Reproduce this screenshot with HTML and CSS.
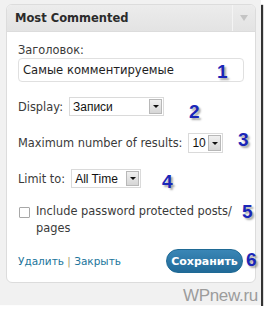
FILE: index.html
```html
<!DOCTYPE html>
<html>
<head>
<meta charset="utf-8">
<link rel="stylesheet" href="styles.css">
</head>
<body>
<div class="frame">
  <div class="widget">
    <div class="head">
      <span class="title">Most Commented</span>
      <span class="toggle"><span class="tri"></span></span>
    </div>
    <div class="body">
      <div class="label">Заголовок:</div>
      <div class="input">Самые комментируемые</div>
      <div class="row r-display"><span class="lbl">Display:</span><span class="select s-display"><span class="val">Записи</span><span class="btn"><span class="dtri"></span></span></span></div>
      <div class="row r-max"><span class="lbl">Maximum number of results:</span><span class="select s-max"><span class="val">10</span><span class="btn"><span class="dtri"></span></span></span></div>
      <div class="row r-limit"><span class="lbl">Limit to:</span><span class="select s-limit"><span class="val">All Time</span><span class="btn"><span class="dtri"></span></span></span></div>
      <div class="check"><span class="box"></span><span class="ctext">Include password protected posts/<br>pages</span></div>
      <div class="foot">
        <span class="links"><a class="lnk">Удалить</a> <span class="sep">|</span> <a class="lnk">Закрыть</a></span>
        <span class="save">Сохранить</span>
      </div>
    </div>
    <span class="num n1">1</span>
    <span class="num n2">2</span>
    <span class="num n3">3</span>
    <span class="num n4">4</span>
    <span class="num n5">5</span>
    <span class="num n6">6</span>
  </div>
  <div class="mark">WPnew.ru</div>
</div>
</body>
</html>
```
FILE: styles.css
```css
html, body { margin: 0; padding: 0; background: #ffffff; }
.frame {
  width: 261px; height: 306px;
  background: #f1f1f1;
  border-bottom: 1px solid #fdfdfd;
  padding: 4px 0 0 6px;
  box-sizing: border-box;
  display: flex; flex-direction: column;
  box-shadow: 3px 4px 1px -1px #333;
  font-family: "DejaVu Sans", Verdana, sans-serif;
  color: #333;
}
.widget {
  position: relative;
  width: 250px; height: 279px;
  box-sizing: border-box;
  background: #fff;
  border: 1px solid #dcdcdc;
  border-radius: 6px;
}
.head {
  height: 26px;
  display: flex; align-items: center; justify-content: space-between;
  background: linear-gradient(#ececec, #e3e3e3);
  border-bottom: 1px solid #dcdcdc;
  border-radius: 5px 5px 0 0;
}
.title {
  font-family: "DejaVu Sans", Verdana, sans-serif;
  font-weight: bold; font-size: 11.5px; color: #2b2b2b;
  padding-left: 8px;
}
.toggle {
  width: 22px; height: 26px;
  border-left: 1px solid #f4f4f4;
  display: flex; align-items: center; justify-content: center;
}
.tri {
  width: 0; height: 0;
  border-left: 4px solid transparent; border-right: 4px solid transparent;
  border-top: 6px solid #c4c4c4;
}
.body { padding: 12px 0 0 11px; font-size: 11.4px; color: #3a3a3a; }
.label { line-height: 13px; height: 13px; margin-bottom: 1px; }
.input {
  width: 226px; height: 24px; box-sizing: border-box;
  border: 1px solid #e0e0e0; border-radius: 4px;
  font-family: "DejaVu Sans", Verdana, sans-serif;
  font-size: 11.6px; color: #1e1e1e; line-height: 22px; padding-left: 4px;
}
.row { display: flex; align-items: center; }
.r-display { margin-top: 15px; height: 19px; }
.r-max { margin-top: 17px; height: 20px; }
.r-limit { margin-top: 16px; height: 19px; }
.lbl { margin-right: 6px; }
.select {
  display: flex; align-items: center; justify-content: space-between;
  height: 100%; box-sizing: border-box;
  border: 1px solid #dadada; background: #fff;
  padding: 1px 1px 1px 3px;
  font-family: "Liberation Sans", Arial, sans-serif;
  font-size: 12px; color: #111;
}
.s-display { width: 95px; }
.s-max { width: 35px; }
.s-limit { width: 70px; }
.btn {
  width: 13px; height: 100%; box-sizing: border-box;
  background: linear-gradient(#f0f0f0, #d6d6d6);
  border: 1px solid #b8b8b8;
  display: flex; align-items: center; justify-content: center;
}
.dtri {
  width: 0; height: 0;
  border-left: 3px solid transparent; border-right: 3px solid transparent;
  border-top: 3px solid #111;
}
.check { margin-top: 15px; display: flex; align-items: flex-start; line-height: 17px; }
.box {
  width: 9px; height: 9px; border: 1px solid #a8a8a8; border-radius: 1px;
  margin: 4px 6px 0 1px; flex: none; background: #fff;
}
.ctext { display: block; }
.foot {
  margin-top: 12px; width: 225px;
  display: flex; align-items: center; justify-content: space-between;
}
.links { font-size: 10.5px; }
.lnk { color: #21759b; text-decoration: none; }
.sep { color: #a99a6a; }
.save {
  width: 77px; height: 24px; box-sizing: border-box;
  border-radius: 12px;
  background: linear-gradient(#3a86b6, #216a98);
  border: 1px solid #1f6a95;
  color: #fff; font-weight: bold; font-size: 11px;
  display: flex; align-items: center; justify-content: center;
}
.num {
  position: absolute;
  font-family: "Liberation Sans", Arial, sans-serif;
  font-weight: bold; font-size: 19px; line-height: 19px;
  color: #1a26b8;
  text-shadow: 2px 2px 2px rgba(0,0,0,0.35);
}
.n1 { left: 210px; top: 57px; }
.n2 { left: 182px; top: 97px; }
.n3 { left: 231px; top: 125px; }
.n4 { left: 155px; top: 167px; }
.n5 { left: 235px; top: 197px; }
.n6 { left: 239px; top: 245px; }
.mark {
  align-self: flex-end;
  margin: 5px 3px 0 0;
  font-family: "Liberation Sans", Arial, sans-serif;
  font-size: 17px; line-height: 15px; color: #9c9c9c;
  letter-spacing: -0.3px;
}
```
